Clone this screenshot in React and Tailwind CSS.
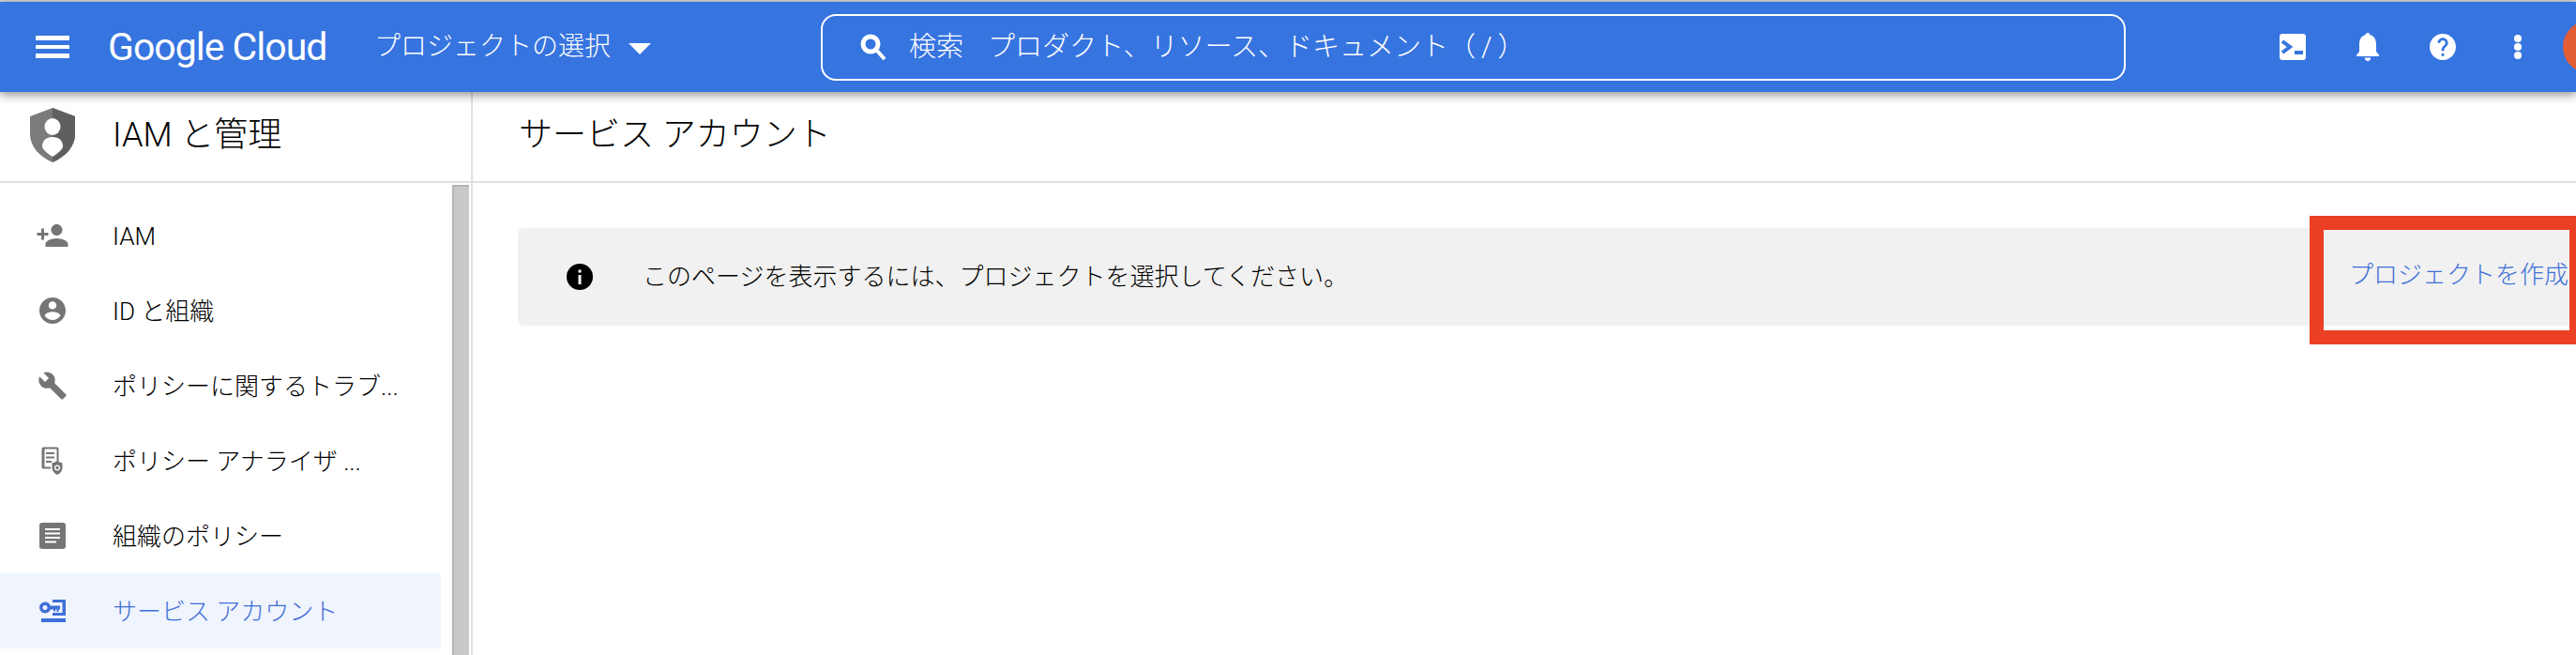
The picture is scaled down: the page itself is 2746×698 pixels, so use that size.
const sans = "font-['Roboto','Noto_Sans_CJK_JP','Noto_Sans',sans-serif]";

const GRAY = '#757575';
const BLUE = '#3f6fd8';

const PersonAdd = () => (
  <svg width="36" height="36" viewBox="0 0 24 24" fill={GRAY}>
    <path d="M15 12c2.21 0 4-1.79 4-4s-1.79-4-4-4-4 1.79-4 4 1.79 4 4 4zm-9-2V7H4v3H1v2h3v3h2v-3h3v-2H6zm9 4c-2.67 0-8 1.34-8 4v2h16v-2c0-2.66-5.33-4-8-4z" />
  </svg>
);

const AccountCircle = () => (
  <svg width="28" height="28" viewBox="2 2 20 20" fill={GRAY}>
    <path d="M12 2C6.48 2 2 6.48 2 12s4.48 10 10 10 10-4.48 10-10S17.52 2 12 2zm0 3c1.66 0 3 1.34 3 3s-1.34 3-3 3-3-1.34-3-3 1.34-3 3-3zm0 14.2c-2.5 0-4.71-1.28-6-3.22.03-1.99 4-3.08 6-3.08 1.99 0 5.97 1.09 6 3.08-1.29 1.94-3.5 3.22-6 3.22z" />
  </svg>
);

const Wrench = () => (
  <svg width="32" height="32" viewBox="0 0 24 24" fill={GRAY}>
    <path d="M22.7 19l-9.1-9.1c.9-2.3.4-5-1.5-6.9-2-2-5-2.4-7.4-1.3L9 6 6 9 1.6 4.7C.4 7.1.9 10.1 2.9 12.1c1.9 1.9 4.6 2.4 6.9 1.5l9.1 9.1c.4.4 1 .4 1.4 0l2.3-2.3c.5-.4.5-1.1.1-1.4z" />
  </svg>
);

const Analyzer = () => (
  <svg width="36" height="36" viewBox="1 -3 36 36">
    <path d="M9 .5h15a1.5 1.5 0 0 1 1.5 1.5v14h-2V2.500h-13v19H17v2H9A1.500 1.500 0 0 1 7.500 22V2A1.500 1.500 0 0 1 9 .5z" fill={GRAY} />
    <path d="M12 6h9v2h-9zM12 10.500h9v2h-9zM12 15h6v2h-6z" fill={GRAY} />
    <path d="M24 15.500l5.500 2v5c0 3.500-2.500 6-5.500 7.500-3-1.500-5.500-4-5.500-7.500v-5z" fill={GRAY} />
    <circle cx="24" cy="22.500" r="2.400" fill="none" stroke="#fff" strokeWidth="1.300" />
  </svg>
);

const Article = () => (
  <svg width="28" height="28" viewBox="0 0 28 28">
    <rect width="28" height="28" rx="3" fill={GRAY} />
    <path d="M6 6h16v2H6zM6 10.500h16v2H6zM6 15h16v2H6zM6 19.500h12v2H6z" fill="#fff" />
  </svg>
);

const ServiceKey = () => (
  <svg width="28" height="24" viewBox="0 0 28 24" fill={BLUE}>
    <path fillRule="evenodd" d="M6 2.500a6 6 0 0 1 5.700 4H22v4h-1.500v2.500h-2v-2.500h-1.500v2h-2v-2h-3.300A6 6 0 1 1 6 2.500zm0 3.500a2.500 2.500 0 1 0 0 5 2.500 2.500 0 0 0 0-5z" />
    <path d="M14 0h14v17H14v-3h10.500V3H14zM2 20h26v4H2z" />
  </svg>
);

const Shield = () => (
  <svg width="48" height="58" viewBox="0 0 48 58">
    <path d="M24 0l24 9v19c0 13-10 24-24 30C10 52 0 41 0 28V9z" fill="#7b7b7b" />
    <path d="M24 0l24 9v19c0 13-10 24-24 30z" fill="#5f5f5f" />
    <ellipse cx="24" cy="20" rx="8.500" ry="9" fill="#fff" />
    <path d="M24 31c7 0 11 4 11 10 0 3-6 8-11 11-5-3-11-8-11-11 0-6 4-10 11-10z" fill="#fff" />
  </svg>
);

const menu = [
  { label: 'IAM', icon: <PersonAdd /> },
  { label: 'ID と組織', icon: <AccountCircle /> },
  { label: 'ポリシーに関するトラブ...', icon: <Wrench /> },
  { label: 'ポリシー アナライザ ...', icon: <Analyzer /> },
  { label: '組織のポリシー', icon: <Article /> },
  { label: 'サービス アカウント', icon: <ServiceKey />, active: true },
];

const TopBar = () => (
  <header className="relative z-10 h-[96px] shrink-0 bg-[#3674e0] text-white flex items-center shadow-[0_3px_10px_rgba(0,0,0,0.45)]">
    <div className="ml-[38px] w-[36px] h-[24px] shrink-0 flex flex-col justify-between">
      <span className="h-[5px] bg-white" />
      <span className="h-[4px] bg-white" />
      <span className="h-[5px] bg-white" />
    </div>
    <span className="ml-[41px] w-[232px] shrink-0 text-[41px] leading-none tracking-[-1px] whitespace-nowrap">Google Cloud</span>
    <span className="ml-[52px] shrink-0 text-[28px] leading-none font-light whitespace-nowrap">プロジェクトの選択</span>
    <span className="ml-[19px] w-0 h-0 mt-[4px] shrink-0 border-x-[12px] border-x-transparent border-t-[12px] border-t-white" />
    <div className="ml-[181px] w-[1391px] h-[71px] shrink-0 border-2 border-white rounded-[16px] flex items-center pl-[39px]">
      <svg width="30" height="30" viewBox="0 0 30 30" fill="none" stroke="#fff">
        <circle cx="12" cy="12" r="8" strokeWidth="5" />
        <path d="M18 18l9 10" strokeWidth="4" />
      </svg>
      <span className="ml-[23px] text-[29px] leading-none font-light whitespace-nowrap">検索</span>
      <span className="ml-[26px] text-[29px] leading-none font-light whitespace-nowrap">
        プロダクト、リソース、ドキュメント（<span className="px-[6px]">/</span>）
      </span>
    </div>
    <div className="ml-[164px] w-[28px] h-[28px] shrink-0 bg-white rounded-[3px] flex items-center justify-center">
      <svg width="28" height="28" viewBox="0 0 28 28" fill="none" stroke="#3674e0" strokeWidth="4">
        <path d="M3 8l8 6-8 6" />
        <path d="M16 20h9" />
      </svg>
    </div>
    <svg className="ml-[54px] shrink-0" width="24" height="30" viewBox="0 0 24 30" fill="#fff">
      <path d="M12 0c1.500 0 2.500 1 2.500 2.300C19 3.400 21 7.500 21 12v8l3 3.500v1.500H0v-1.500L3 20v-8c0-4.500 2-8.600 6.500-9.700C9.500 1 10.500 0 12 0z" />
      <path d="M8.800 26.500h6.400c0 2-1.400 3.500-3.200 3.500s-3.200-1.500-3.200-3.500z" />
    </svg>
    <svg className="ml-[54px] shrink-0" width="28" height="28" viewBox="2 2 20 20" fill="#fff">
      <path d="M12 2C6.480 2 2 6.480 2 12s4.480 10 10 10 10-4.480 10-10S17.520 2 12 2zm1 17h-2v-2h2v2zm2.070-7.750l-.9.920C13.450 12.900 13 13.500 13 15h-2v-.5c0-1.100.45-2.100 1.170-2.830l1.240-1.260c.37-.36.590-.86.590-1.410 0-1.100-.9-2-2-2s-2 .9-2 2H8c0-2.210 1.790-4 4-4s4 1.790 4 4c0 .88-.36 1.680-.93 2.250z" />
    </svg>
    <div className="ml-[62px] w-[8px] shrink-0 flex flex-col gap-[1px]">
      <span className="w-[8px] h-[8px] rounded-full bg-white" />
      <span className="w-[8px] h-[8px] rounded-full bg-white" />
      <span className="w-[8px] h-[8px] rounded-full bg-white" />
    </div>
    <span className="ml-[44px] w-[56px] h-[56px] shrink-0 rounded-full bg-[#e25c34]" />
  </header>
);

const Sidebar = () => (
  <aside className="w-[504px] shrink-0 h-full border-r-2 border-[#e0e0e0] flex flex-col">
    <div className="h-[97px] shrink-0 border-b-2 border-[#e0e0e0] flex items-center pl-[32px] pb-[3px]">
      <Shield />
      <span className="ml-[40px] text-[36px] leading-none font-light text-black whitespace-nowrap">IAM と管理</span>
    </div>
    <div className="flex-1 flex min-h-0">
      <nav className="w-[470px] pt-[16px]">
        {menu.map((item) => (
          <div key={item.label} className={`h-[80px] flex items-center ${item.active ? 'bg-[#eff4fd]' : ''}`}>
            <span className="w-[36px] ml-[38px] flex justify-center">{item.icon}</span>
            <span className={`ml-[46px] mt-[1px] text-[26px] leading-none font-light whitespace-nowrap ${item.active ? 'text-[#3f6fd8]' : 'text-black'}`}>
              {item.label}
            </span>
          </div>
        ))}
      </nav>
      <div className="ml-[12px] mt-[2px] w-[18px] bg-[#c9c9c9] border-l-2 border-t-2 border-[#b5b5b5]" />
    </div>
  </aside>
);

const Main = () => (
  <main className="flex-1 min-w-0 h-full">
    <div className="h-[97px] border-b-2 border-[#e0e0e0] flex items-center pl-[49px] pb-[3px]">
      <h1 className="text-[36px] leading-none font-light text-black whitespace-nowrap">サービス アカウント</h1>
    </div>
    <div className="mt-[48px] ml-[48px] h-[104px] bg-[#f1f1f1] rounded-l-[6px] flex items-center">
      <svg className="ml-[52px] shrink-0" width="28" height="28" viewBox="0 0 28 28">
        <circle cx="14" cy="14" r="14" fill="#000" />
        <path d="M12.500 6.500h3v3h-3zM12.500 12h3v10h-3z" fill="#fff" />
      </svg>
      <p className="ml-[53px] text-[26px] leading-none font-light text-black whitespace-nowrap">このページを表示するには、プロジェクトを選択してください。</p>
      <a className="ml-auto mr-[8px] mb-[5px] text-[26px] leading-none font-light text-[#3f6fd8] whitespace-nowrap">プロジェクトを作成</a>
    </div>
  </main>
);

export default function App() {
  return (
    <div className={`relative w-[2746px] h-[698px] overflow-hidden bg-white flex flex-col pt-[2px] ${sans}`}>
      <div className="absolute inset-x-0 top-0 h-[2px] bg-[#d4d4d4]" />
      <TopBar />
      <div className="flex-1 min-h-0 flex">
        <Sidebar />
        <Main />
      </div>
      {/* red highlight drawn over the create-project link */}
      <div className="absolute left-[2462px] top-[230px] w-[292px] h-[137px] border-[15px] border-[#ec4024]" />
    </div>
  );
}
